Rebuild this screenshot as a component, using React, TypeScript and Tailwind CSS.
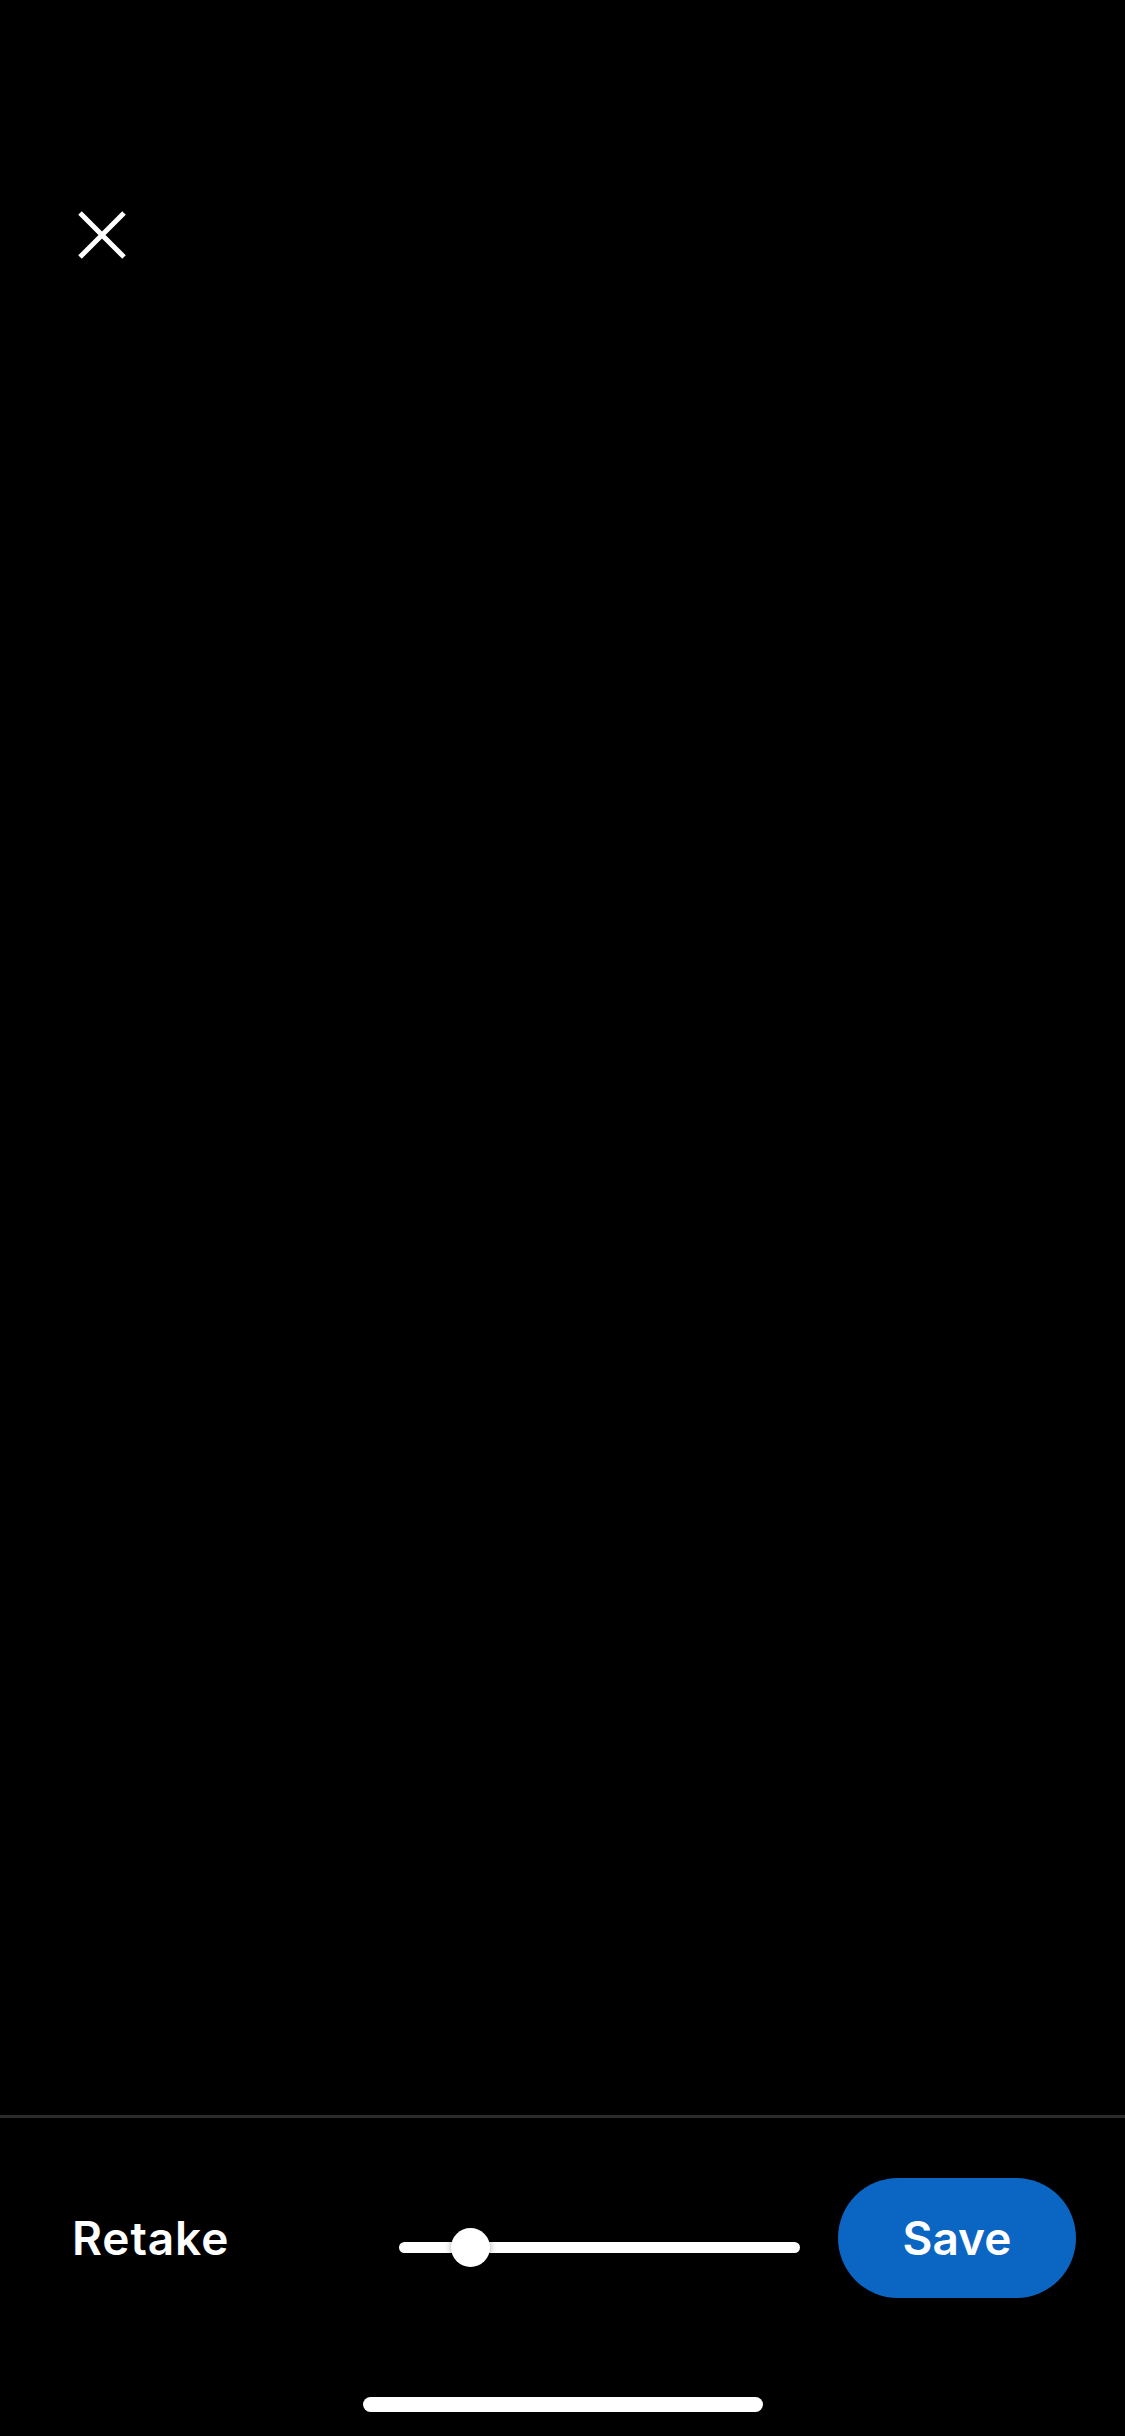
import React from "react"

function CloseIcon() {
  return (
    <svg width="48" height="48" viewBox="0 0 48 48" fill="none" aria-hidden="true">
      <path d="M2 2L46 46M46 2L2 46" stroke="white" strokeWidth="5" />
    </svg>
  )
}

function ZoomSlider({ value }: { value: number }) {
  return (
    <div className="relative mt-[19px] h-[39px] w-[401px]">
      {/* track */}
      <div className="absolute left-0 right-0 top-[14px] h-[11px] rounded-full bg-white" />
      {/* thumb */}
      <div
        className="absolute top-0 h-[39px] w-[39px] rounded-full bg-white shadow-[0_0_6px_rgba(0,0,0,0.35)]"
        style={{ left: `${value * (401 - 39)}px` }}
      />
    </div>
  )
}

export default function App() {
  return (
    <div
      className="flex h-[2436px] w-[1125px] flex-col bg-black text-white"
      style={{ fontFamily: "Inter, 'Liberation Sans', sans-serif" }}
    >
      {/* Top bar */}
      <div className="pl-[78px] pt-[211px]">
        <button type="button" aria-label="Close" className="block">
          <CloseIcon />
        </button>
      </div>

      {/* Camera preview area */}
      <div className="flex-1" />

      {/* Controls */}
      <div className="border-t-[3px] border-[#2b2b2b]">
        <div className="flex items-center pl-[72px] pt-[60px]">
          <div className="w-[327px]">
            <button type="button" className="text-[46px] font-semibold leading-none tracking-[0.9px]">
              Retake
            </button>
          </div>
          <ZoomSlider value={0.145} />
          <button
            type="button"
            className="ml-[38px] flex h-[120px] w-[238px] items-center justify-center rounded-full bg-[#0a66c2] text-[46px] font-semibold leading-none"
          >
            Save
          </button>
        </div>

        {/* Home indicator */}
        <div className="flex justify-center pb-[24px] pt-[99px]">
          <div className="h-[15px] w-[400px] rounded-full bg-white" />
        </div>
      </div>
    </div>
  )
}
